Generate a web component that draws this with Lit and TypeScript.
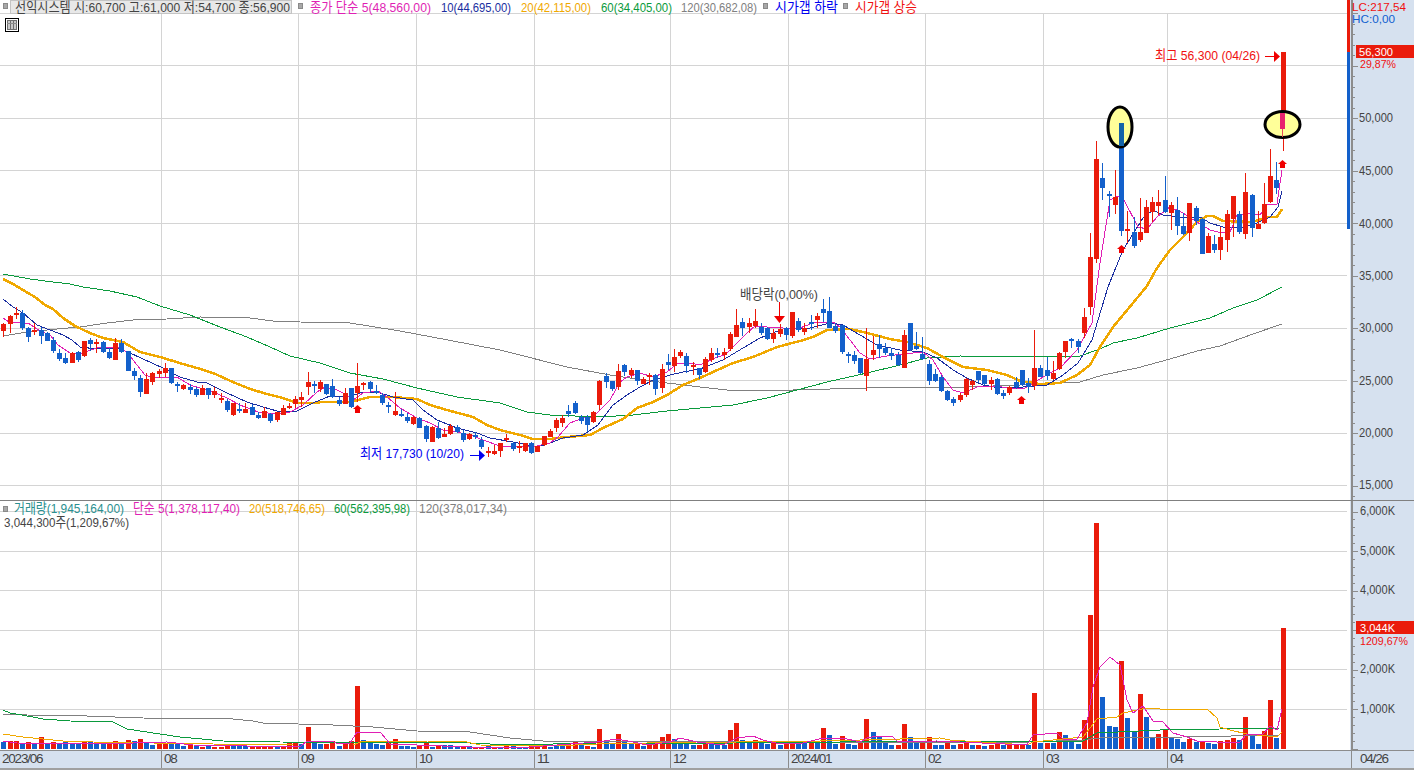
import { html, svg, css, LitElement } from 'lit';
import { customElement } from 'lit/decorators.js';

// candles in chart pixels: colour, wick top, body top, body bottom, wick bottom
const CANDLES = `r 323 324 331 337|r 315 316 324 333|r 307 313 314 319|b 310 313 328 330|b 327 328 337 342|r 323 330 331 335|b 327 330 336 344|b 332 333 341 341|b 337 340 351 353|b 349 353 359 361
b 353 358 363 364|r 352 353 363 363|b 351 352 360 362|r 341 341 356 357|b 338 340 344 351|r 339 342 344 353|b 341 342 352 353|b 348 352 358 359|r 338 343 360 360|b 339 343 352 353
b 351 351 371 371|b 368 371 376 380|b 375 378 392 397|r 373 379 394 394|r 372 373 382 385|r 369 371 374 378|r 363 368 373 377|b 368 368 383 384|b 382 384 385 392|r 384 385 389 390
b 384 387 390 394|b 387 389 395 397|r 385 388 395 395|b 388 388 395 399|r 387 391 395 398|r 393 398 400 403|b 399 401 410 412|r 403 403 415 416|b 403 409 411 413|r 403 409 413 413
b 404 407 415 415|b 412 415 418 419|r 407 411 418 418|b 413 414 421 423|r 412 412 420 422|r 405 408 415 415|r 403 406 407 409|r 396 399 404 408|r 392 397 400 407|r 372 382 387 395
b 381 384 385 393|r 380 382 389 392|b 384 384 394 395|b 379 386 397 398|b 397 400 404 406|r 388 393 404 404|b 388 388 407 408|r 363 386 393 402|r 382 383 385 390|b 381 382 389 392
b 385 391 393 394|b 393 395 403 405|b 402 405 406 413|r 392 411 415 416|b 409 414 416 417|b 413 417 421 423|r 416 417 424 425|b 417 418 428 428|b 425 426 439 442|r 426 427 442 442
b 422 428 438 439|r 428 434 437 437|r 424 426 434 435|b 425 427 432 433|b 430 433 440 442|r 433 434 439 440|b 432 435 436 439|b 437 440 447 449|r 447 451 453 457|r 445 451 454 455
r 443 443 451 457|r 434 438 439 442|b 442 443 449 451|r 441 446 447 453|r 443 443 451 452|b 442 443 453 454|r 446 446 452 452|r 436 436 445 446|r 429 431 437 437|r 418 420 428 432
r 415 418 423 427|b 405 411 414 417|b 401 403 413 414|b 415 417 421 424|b 415 417 425 432|r 411 412 422 423|r 380 381 405 410|b 373 376 382 388|b 381 381 389 391|r 364 371 387 390
b 364 365 372 376|r 368 370 375 378|b 370 370 381 385|r 377 379 384 384|r 373 375 377 385|b 374 375 389 395|r 364 369 388 393|b 354 362 365 370|r 349 357 366 372|r 350 352 356 358
b 353 356 366 373|r 362 365 366 375|b 368 368 375 379|r 357 359 372 373|r 348 353 360 362|b 348 353 354 358|r 348 352 355 360|r 332 334 349 351|r 309 325 337 337|b 318 322 328 336
r 318 323 327 333|r 309 321 326 328|b 323 327 333 335|b 327 328 339 340|r 329 333 339 343|r 324 329 334 337|b 327 328 335 340|r 312 312 336 338|b 318 321 330 332|r 323 328 332 335
b 315 322 324 330|r 313 316 320 328|b 299 309 313 322|b 297 311 328 328|b 323 326 331 333|b 325 325 352 354|b 352 354 356 363|b 351 355 361 364|b 358 358 373 374|r 328 359 376 391
r 336 350 355 360|b 335 344 349 358|b 343 348 353 355|b 348 353 356 360|b 352 355 365 366|r 330 335 368 368|b 323 323 350 351|b 332 346 349 350|b 337 354 359 360|b 360 364 381 385
b 369 374 381 382|b 375 377 391 392|b 390 391 400 401|b 397 399 403 406|r 393 395 400 402|r 378 379 395 397|r 380 381 385 390|b 371 371 380 383|b 375 375 384 385|r 377 380 384 390
b 378 379 394 395|b 390 393 396 399|r 386 387 393 395|b 377 382 387 389|b 370 370 385 386|b 378 383 387 393|r 330 368 386 390|b 365 368 377 377|b 357 370 376 380|r 361 373 379 380
r 352 353 369 370|r 341 341 352 358|b 338 339 341 348|b 339 341 347 353|r 308 317 333 338|r 233 257 307 315|r 141 159 259 263|b 163 178 188 200|b 191 194 196 217|r 170 197 205 214
b 123 123 231 236|r 211 229 230 243|b 217 232 246 248|r 198 232 240 242|r 200 207 233 233|r 197 202 212 222|r 190 202 206 215|b 176 200 212 213|r 202 205 213 230|b 197 210 226 235
b 213 226 234 235|r 203 203 233 241|b 206 208 221 225|b 218 219 254 254|r 233 236 253 253|b 235 244 250 253|r 227 237 250 260|r 210 214 240 252|r 196 196 219 237|b 211 214 232 234
r 173 192 234 239|b 194 195 228 237|r 211 224 229 229|r 183 204 223 224|r 149 176 202 203|b 162 180 188 194|r 52 52 129 151`
  .split(/[|\n]/)
  .map((row) => row.trim().split(' '));

// bar height per day, negative means blue
const VOLUMES = [
  -7, 8, 8, -5, 7, -6, 12, -6, 7, -6, -7, -6, -6, 8, -7, -5, -6, 5, 8, -5, 9, -8, 10, -6, -4, 6, 6, -5, -5, -3,
  5, -4, 2, -3, 2, 2, 4, -3, -3, -3, 3, 3, 3, 3, -2, 3, 6, 7, -5, 22, -7, -5, 5, 8, -3, 5, 8, 63, -9, -8,
  -5, -4, 6, 10, -3, -3, -2, 4, 6, -2, 4, -4, -4, -2, 3, -3, 2, 2, -3, 2, -2, 3, -3, -2, -2, 3, 2, 3, -2, -4,
  -3, 6, 8, -4, 3, -2, 20, -7, -5, 15, -8, -5, 6, -3, 5, 6, 12, 15, -10, -8, -7, -4, 4, 8, -7, -5, -4, 19, 26, -9,
  -8, 9, -7, -5, 6, -4, 5, 7, -7, -6, 8, -7, 21, -14, -5, 13, -5, -4, 6, 30, -17, -13, -6, -4, 4, 25, -12, -6, 6, 12,
  -4, -4, 6, -4, 5, 6, -4, 4, -3, 4, 6, -4, 4, 5, 5, -4, 56, -6, 6, -6, 17, -14, -7, -5, 29, 134, 226, -52, -23, -22,
  88, -31, -18, 55, -32, -12, 15, 20, -11, -10, -7, 10, -7, 8, -6, -5, 8, 9, 11, -9, 32, -13, -5, 18, 49, -11, 121,
];

const MA_PRICE = {
  m5: '3,318 9,322 21,323 28,323 40,331 50,335 58,345 70,353 82,353 97,348 107,347 120,348 127,352 137,365 145,375 153,378 167,377 177,377 190,385 213,392 227,398 240,405 258,412 277,414 290,412 303,405 317,392 325,387 337,390 347,395 353,400 363,393 378,391 387,397 400,408 417,418 430,423 443,430 457,432 470,435 483,440 500,446 523,446 537,446 550,443 558,437 570,423 583,418 593,417 610,400 620,382 627,377 640,373 653,377 667,372 678,363 690,363 700,365 717,357 725,355 737,343 747,333 755,326 767,327 783,328 800,328 813,323 833,322 840,327 850,340 860,353 870,359 887,356 903,354 923,352 933,360 943,377 953,390 963,393 977,387 993,386 1010,388 1023,389 1030,385 1050,373 1060,368 1077,350 1092,323 1100,263 1110,200 1118,196 1124,200 1138,227 1147,229 1157,217 1170,207 1183,213 1197,222 1210,230 1222,233 1230,232 1237,215 1250,213 1260,215 1267,205 1277,204 1282,170',
  m10: '3,299 13,307 23,313 37,325 50,330 63,335 72,340 80,347 97,349 117,348 128,352 143,359 163,368 180,377 197,382 207,383 227,393 247,402 263,407 277,411 297,411 313,403 330,396 350,396 360,393 377,392 393,397 413,400 423,410 437,420 457,428 477,433 490,438 513,442 537,447 550,443 563,438 583,435 598,425 613,405 627,395 640,387 653,380 670,375 683,372 700,369 723,360 743,348 760,338 783,329 810,328 830,323 843,325 860,335 877,345 900,350 923,352 937,358 953,370 967,378 983,385 1000,388 1023,387 1047,385 1063,375 1078,363 1092,340 1098,320 1108,287 1112,277 1123,250 1143,218 1153,210 1163,215 1180,217 1200,217 1210,223 1223,227 1243,227 1257,223 1270,217 1278,207 1282,191',
  m20: '3,279 13,284 28,293 35,297 45,305 53,309 63,318 75,326 90,333 103,338 123,342 140,352 160,357 183,364 197,368 213,373 233,382 250,389 267,394 283,398 297,403 313,403 323,402 340,402 350,402 370,397 393,397 417,399 430,405 447,410 473,417 487,425 500,430 520,435 533,439 550,439 567,437 590,435 603,428 623,419 637,408 653,402 667,395 683,385 700,378 713,372 733,363 753,357 777,347 800,341 813,337 827,330 850,329 867,333 890,339 907,342 927,348 943,357 963,367 987,370 1007,375 1020,381 1040,384 1060,383 1077,375 1090,365 1100,347 1113,327 1133,303 1147,286 1157,268 1170,250 1183,237 1197,222 1207,216 1213,216 1223,221 1253,222 1267,217 1277,217 1282,209',
  m60: '3,274 30,279 53,282 70,284 83,287 110,291 137,297 160,306 190,315 220,327 247,337 270,347 290,356 320,363 350,373 383,379 417,388 457,397 500,403 527,412 550,415 600,417 633,415 667,411 700,408 733,405 767,398 797,390 827,382 867,373 900,365 927,358 960,356 1050,357 1080,356 1100,349 1113,343 1137,338 1170,328 1210,318 1233,308 1257,300 1282,287',
  m120: '3,336 27,332 57,329 80,327 107,323 133,320 167,319 200,317 250,318 273,321 300,322 350,323 400,331 448,340 500,350 567,367 610,375 643,380 700,387 727,390 793,390 867,388 967,387 1020,385 1080,382 1103,375 1137,368 1170,359 1197,351 1220,346 1253,334 1282,324',
};

const MA_VOLUME = {
  m120: '3,714 27,715 87,716 143,718 233,719 253,721 263,723 333,725 373,727 417,731 470,732 490,735 510,738 543,741 597,741 820,742 940,743 1030,742 1083,740 1100,738 1183,737 1280,735',
  m60: '3,710 10,713 33,717 43,719 70,721 113,722 127,729 160,734 180,737 223,741 280,742 470,743 510,745 597,743 733,743 840,742 940,741 1083,741 1097,733 1160,730 1280,728',
  m20: '3,734 23,737 63,741 93,742 213,744 293,745 353,745 363,741 427,741 467,742 480,745 553,746 597,744 697,742 723,743 750,741 820,741 940,738 950,740 1027,745 1033,742 1083,737 1097,719 1117,717 1123,713 1147,708 1160,709 1207,709 1217,718 1220,727 1230,730 1247,734 1277,737 1282,732',
  m5: '3,741 17,743 100,744 167,742 193,745 300,747 307,741 333,741 337,744 350,743 357,732 380,732 387,740 390,744 470,747 530,747 597,742 617,739 633,742 647,745 670,742 680,738 697,742 723,745 737,738 753,736 763,740 780,744 803,743 823,738 843,738 860,742 867,738 878,736 892,736 898,742 937,741 1027,745 1033,735 1057,733 1063,739 1077,739 1087,723 1093,687 1100,667 1110,657 1120,665 1127,700 1133,713 1143,706 1153,721 1163,722 1173,733 1187,737 1197,741 1217,742 1240,742 1247,734 1263,734 1270,726 1277,730 1282,709',
};

const MONTH_LINES = [161, 298, 416, 534, 670, 788, 925, 1043, 1167];
const PRICE_GRID = [13, 65.5, 118, 170.5, 223, 275.5, 328, 380.5, 433, 485.5];
const VOLUME_GRID = [511.5, 551, 590.5, 630, 669.5, 709];

const candleX = (i: number) => Math.round(3.3 + 6.21 * i);

const label = (x: number, y: number, w: number, s: string, cls: string) =>
  svg`<text class="t ${cls}" x=${x} y=${y} textLength=${w} lengthAdjust="spacingAndGlyphs">${s}</text>`;

const marker = (x: number, y: number) =>
  svg`<rect class="marker" x=${x + 0.5} y=${y + 0.5} width="4" height="5"></rect>`;

const gridLines = (rows: number[], top: number, bottom: number) => svg`
  ${rows.map((y) => svg`<line class="grid" x1="0" x2="1347" y1=${y} y2=${y}></line>`)}
  ${MONTH_LINES.map((x) => svg`<line class="grid" x1=${x + 0.5} x2=${x + 0.5} y1=${top} y2=${bottom}></line>`)}
`;

const maLine = (points: string, cls: string) => svg`<polyline class="ma ${cls}" points=${points}></polyline>`;

const upArrow = (x: number, top: number) =>
  svg`<polygon class="fill-red" points="${x + 0.5},${top} ${x + 5},${top + 4} ${x + 3},${top + 4} ${x + 3},${top + 8} ${x - 2},${top + 8} ${x - 2},${top + 4} ${x - 4},${top + 4}"></polygon>`;

const ticks = (from: number, step: number, count: number, majorEvery: number) =>
  Array.from({ length: count }, (_, i) => {
    const y = Math.round(from + step * i) + 0.5;
    return svg`<line class="tick" x1="1352" x2=${i % majorEvery === 0 ? 1358 : 1355} y1=${y} y2=${y}></line>`;
  });

const shared = css`
  :host {
    display: block;
  }
  svg {
    display: block;
  }
  .t {
    font-family: 'Liberation Sans', 'Noto Sans CJK KR', sans-serif;
    font-size: 13.5px;
  }
  .t.narrow {
    font-size: 11px;
  }
  .dark { fill: #444444; }
  .red { fill: #f01010; }
  .blue { fill: #0000f0; }
  .sky { fill: #1060d0; }
  .mag { fill: #e01fb4; }
  .navy { fill: #1a2ea0; }
  .orange { fill: #f0a800; }
  .green { fill: #0a9a3c; }
  .gray { fill: #808080; }
  .teal { fill: #2a9090; }
  .white { fill: #ffffff; }
  .fill-red { fill: #f00000; }
  .grid {
    stroke: #d4d4d4;
    stroke-width: 1;
    shape-rendering: crispEdges;
  }
  .tick {
    stroke: #8c8c8c;
    stroke-width: 1;
    shape-rendering: crispEdges;
  }
  .axis-line {
    stroke: #8c8c8c;
    stroke-width: 2;
    shape-rendering: crispEdges;
  }
  .marker {
    fill: #a8a8a8;
    stroke: #8a8a8a;
    stroke-width: 1;
    shape-rendering: crispEdges;
  }
  .ma {
    fill: none;
    stroke-width: 1;
    shape-rendering: crispEdges;
  }
  .ma.m5 { stroke: #e01fb4; }
  .ma.m10 { stroke: #1a2ea0; }
  .ma.m20 { stroke: #f0a800; }
  .ma.m60 { stroke: #0a9a3c; }
  .ma.m120 { stroke: #808080; }
  .bar {
    shape-rendering: crispEdges;
  }
  .bar.r { fill: #ea1b0b; }
  .bar.b { fill: #1360cb; }
  .pane {
    display: flex;
  }
  .plot {
    width: 1350px;
    background: #ffffff;
  }
  .axis {
    width: 64px;
    background: #d6e1ef;
  }
  .tag {
    fill: #ea1b0b;
  }
`;

@customElement('price-pane')
export class PricePane extends LitElement {
  static styles = [
    shared,
    css`
      .pane {
        height: 500px;
        border-bottom: 1px solid #808080;
      }
      .plot,
      .axis {
        height: 500px;
      }
      .ma.m20 {
        stroke-width: 2.5;
      }
      .legend-box {
        fill: #e8e8e8;
        stroke: #c4c4c4;
        shape-rendering: crispEdges;
      }
      .halo {
        fill: #ffff99;
        stroke: #000000;
        stroke-width: 3;
      }
      .icon-frame {
        fill: #ffffff;
        stroke: #000000;
        shape-rendering: crispEdges;
      }
      .icon-cell {
        fill: #c8c8c8;
        stroke: #707070;
        shape-rendering: crispEdges;
      }
      .arrow-red { stroke: #f00000; }
      .arrow-blue { stroke: #0000f0; }
      .fill-blue { fill: #0000f0; }
      .seg-blue { fill: #1463a8; }
      .seg-pink { fill: #e8226e; }
      .seg-wick { fill: #e84a5a; }
    `,
  ];

  legend() {
    return svg`
      ${marker(3, 3)}
      <rect class="legend-box" x="10.5" y="0.5" width="281" height="13"></rect>
      ${label(15, 12, 275, '선익시스템 시:60,700 고:61,000 저:54,700 종:56,900', 'dark')}
      ${marker(298, 3)}
      ${label(310, 12, 121, '종가 단순 5(48,560,00)', 'mag')}
      ${label(441, 12, 70, '10(44,695,00)', 'navy')}
      ${label(521, 12, 70, '20(42,115,00)', 'orange')}
      ${label(601, 12, 71, '60(34,405,00)', 'green')}
      ${label(681, 12, 76, '120(30,682,08)', 'gray')}
      ${marker(763, 3)}
      ${label(775, 12, 63, '시가갭 하락', 'blue')}
      ${marker(843, 3)}
      ${label(855, 12, 62, '시가갭 상승', 'red')}
      <rect class="icon-frame" x="5.5" y="18.5" width="13" height="13"></rect>
      <rect class="icon-cell" x="7.5" y="20.5" width="3" height="9"></rect>
      <rect class="icon-cell" x="10.5" y="20.5" width="3" height="9"></rect>
      <rect class="icon-cell" x="13.5" y="20.5" width="3" height="9"></rect>
      <line class="tick" x1="7" x2="17" y1="23.5" y2="23.5"></line>
    `;
  }

  candles() {
    return CANDLES.map(([c, wt, bt, bb, wb], i) => {
      const x = candleX(i);
      return svg`
        <rect class="bar ${c}" x=${x} y=${wt} width="1" height=${+wb - +wt}></rect>
        <rect class="bar ${c}" x=${x - 2} y=${bt} width="5" height=${Math.max(+bb - +bt, 2)}></rect>
      `;
    });
  }

  notes() {
    return svg`
      ${label(1155, 60, 105, '최고 56,300 (04/26)', 'red')}
      <line class="arrow-red" x1="1265" x2="1276" y1="56.5" y2="56.5"></line>
      <polygon class="fill-red" points="1280,56.5 1274,51 1274,62"></polygon>
      ${label(360, 458, 104, '최저 17,730 (10/20)', 'blue')}
      <line class="arrow-blue" x1="470" x2="481" y1="455.5" y2="455.5"></line>
      <polygon class="fill-blue" points="485,455.5 479,450 479,461"></polygon>
      ${label(740, 299, 78, '배당락(0,00%)', 'dark')}
      <rect class="fill-red" x="779" y="302" width="1" height="14"></rect>
      <polygon class="fill-red" points="774,316 785,316 779.5,323"></polygon>
      ${upArrow(357, 405)}
      ${upArrow(1021, 396)}
      ${upArrow(1121, 245)}
      ${upArrow(1282, 160)}
      <ellipse class="halo" cx="1120" cy="127" rx="12" ry="20"></ellipse>
      <rect class="seg-blue" x="1119" y="123" width="5" height="23"></rect>
      <ellipse class="halo" cx="1282.5" cy="124.5" rx="17.5" ry="13"></ellipse>
      <rect class="seg-pink" x="1280" y="113" width="5" height="16"></rect>
      <rect class="seg-wick" x="1282" y="129" width="1" height="8"></rect>
    `;
  }

  render() {
    const yLabels = [
      ['50,000', 122],
      ['45,000', 175],
      ['40,000', 228],
      ['35,000', 280],
      ['30,000', 332],
      ['25,000', 385],
      ['20,000', 437],
      ['15,000', 489],
    ] as const;
    return html`
      <div class="pane">
        <svg class="plot" viewBox="0 0 1350 500">
          ${gridLines(PRICE_GRID, 13, 500)}
          <rect class="bar r" x="1347" y="0" width="3" height="52"></rect>
          <rect class="bar b" x="1347" y="52" width="3" height="177"></rect>
          ${maLine(MA_PRICE.m120, 'm120')} ${maLine(MA_PRICE.m60, 'm60')} ${maLine(MA_PRICE.m20, 'm20')}
          ${maLine(MA_PRICE.m10, 'm10')} ${maLine(MA_PRICE.m5, 'm5')} ${this.candles()} ${this.notes()}
          ${this.legend()}
        </svg>
        <svg class="axis" viewBox="1350 0 64 500">
          <line class="axis-line" x1="1352" x2="1352" y1="0" y2="500"></line>
          ${ticks(13, 10.5, 47, 5)}
          ${yLabels.map(([s, y]) => label(1359, y, 34, s, 'dark'))}
          ${label(1352, 11, 54, 'LC:217,54', 'red narrow')}
          ${label(1352, 23, 43, 'HC:0,00', 'sky narrow')}
          <rect class="tag" x="1356" y="45" width="58" height="13"></rect>
          ${label(1359, 56, 34, '56,300', 'white narrow')}
          ${label(1360, 68, 36, '29,87%', 'red narrow')}
        </svg>
      </div>
    `;
  }
}

@customElement('volume-pane')
export class VolumePane extends LitElement {
  static styles = [
    shared,
    css`
      .plot,
      .axis {
        height: 249px;
      }
    `,
  ];

  render() {
    const yLabels = [
      ['6,000K', 515],
      ['5,000K', 555],
      ['4,000K', 594],
      ['2,000K', 673],
      ['1,000K', 713],
    ] as const;
    return html`
      <div class="pane">
        <svg class="plot" viewBox="0 501 1350 249">
          ${gridLines(VOLUME_GRID, 501, 750)}
          ${VOLUMES.map((v, i) => {
            const h = Math.abs(v);
            return svg`<rect class="bar ${v > 0 ? 'r' : 'b'}" x=${candleX(i) - 2} y=${749 - h} width="5" height=${h}></rect>`;
          })}
          ${maLine(MA_VOLUME.m120, 'm120')} ${maLine(MA_VOLUME.m60, 'm60')} ${maLine(MA_VOLUME.m20, 'm20')}
          ${maLine(MA_VOLUME.m5, 'm5')} ${marker(3, 506)}
          ${label(14, 513, 110, '거래량(1,945,164,00)', 'teal')}
          ${label(133, 513, 107, '단순 5(1,378,117,40)', 'mag')}
          ${label(249, 513, 76, '20(518,746,65)', 'orange')}
          ${label(334, 513, 76, '60(562,395,98)', 'green')}
          ${label(419, 513, 88, '120(378,017,34)', 'gray')}
          ${label(4, 527, 125, '3,044,300주(1,209,67%)', 'dark')}
        </svg>
        <svg class="axis" viewBox="1350 501 64 249">
          <line class="axis-line" x1="1352" x2="1352" y1="501" y2="750"></line>
          ${ticks(511.5, 7.9, 31, 5)}
          ${yLabels.map(([s, y]) => label(1360, y, 35, s, 'dark'))}
          <rect class="tag" x="1356" y="621" width="58" height="13"></rect>
          ${label(1360, 632, 35, '3,044K', 'white narrow')}
          ${label(1360, 645, 48, '1209,67%', 'red narrow')}
        </svg>
      </div>
    `;
  }
}

@customElement('time-axis')
export class TimeAxis extends LitElement {
  static styles = css`
    :host {
      display: block;
    }
    .strip {
      display: flex;
      height: 17px;
      background: #d6e1ef;
      border-top: 1px solid #8c8c8c;
      border-bottom: 2px solid #a0a0a0;
    }
    .cell {
      box-sizing: border-box;
      padding-left: 2px;
      border-right: 1px solid #8c8c8c;
      color: #444444;
      font: 13.5px/16px 'Liberation Sans', sans-serif;
      letter-spacing: -1.2px;
    }
    .last {
      flex: 1;
      padding-left: 8px;
      border-right: 0;
    }
  `;

  render() {
    const cells: [string, number][] = [
      ['2023/06', 162],
      ['08', 137],
      ['09', 118],
      ['10', 118],
      ['11', 136],
      ['12', 118],
      ['2024/01', 137],
      ['02', 118],
      ['03', 124],
      ['04', 184],
    ];
    return html`
      <div class="strip">
        ${cells.map(([s, w]) => html`<div class="cell" style="width:${w}px">${s}</div>`)}
        <div class="cell last">04/26</div>
      </div>
    `;
  }
}

@customElement('app-root')
export class AppRoot extends LitElement {
  static styles = css`
    :host {
      display: block;
      width: 1414px;
      height: 770px;
      overflow: hidden;
      background: #ffffff;
    }
  `;

  render() {
    return html`<price-pane></price-pane><volume-pane></volume-pane><time-axis></time-axis>`;
  }
}
